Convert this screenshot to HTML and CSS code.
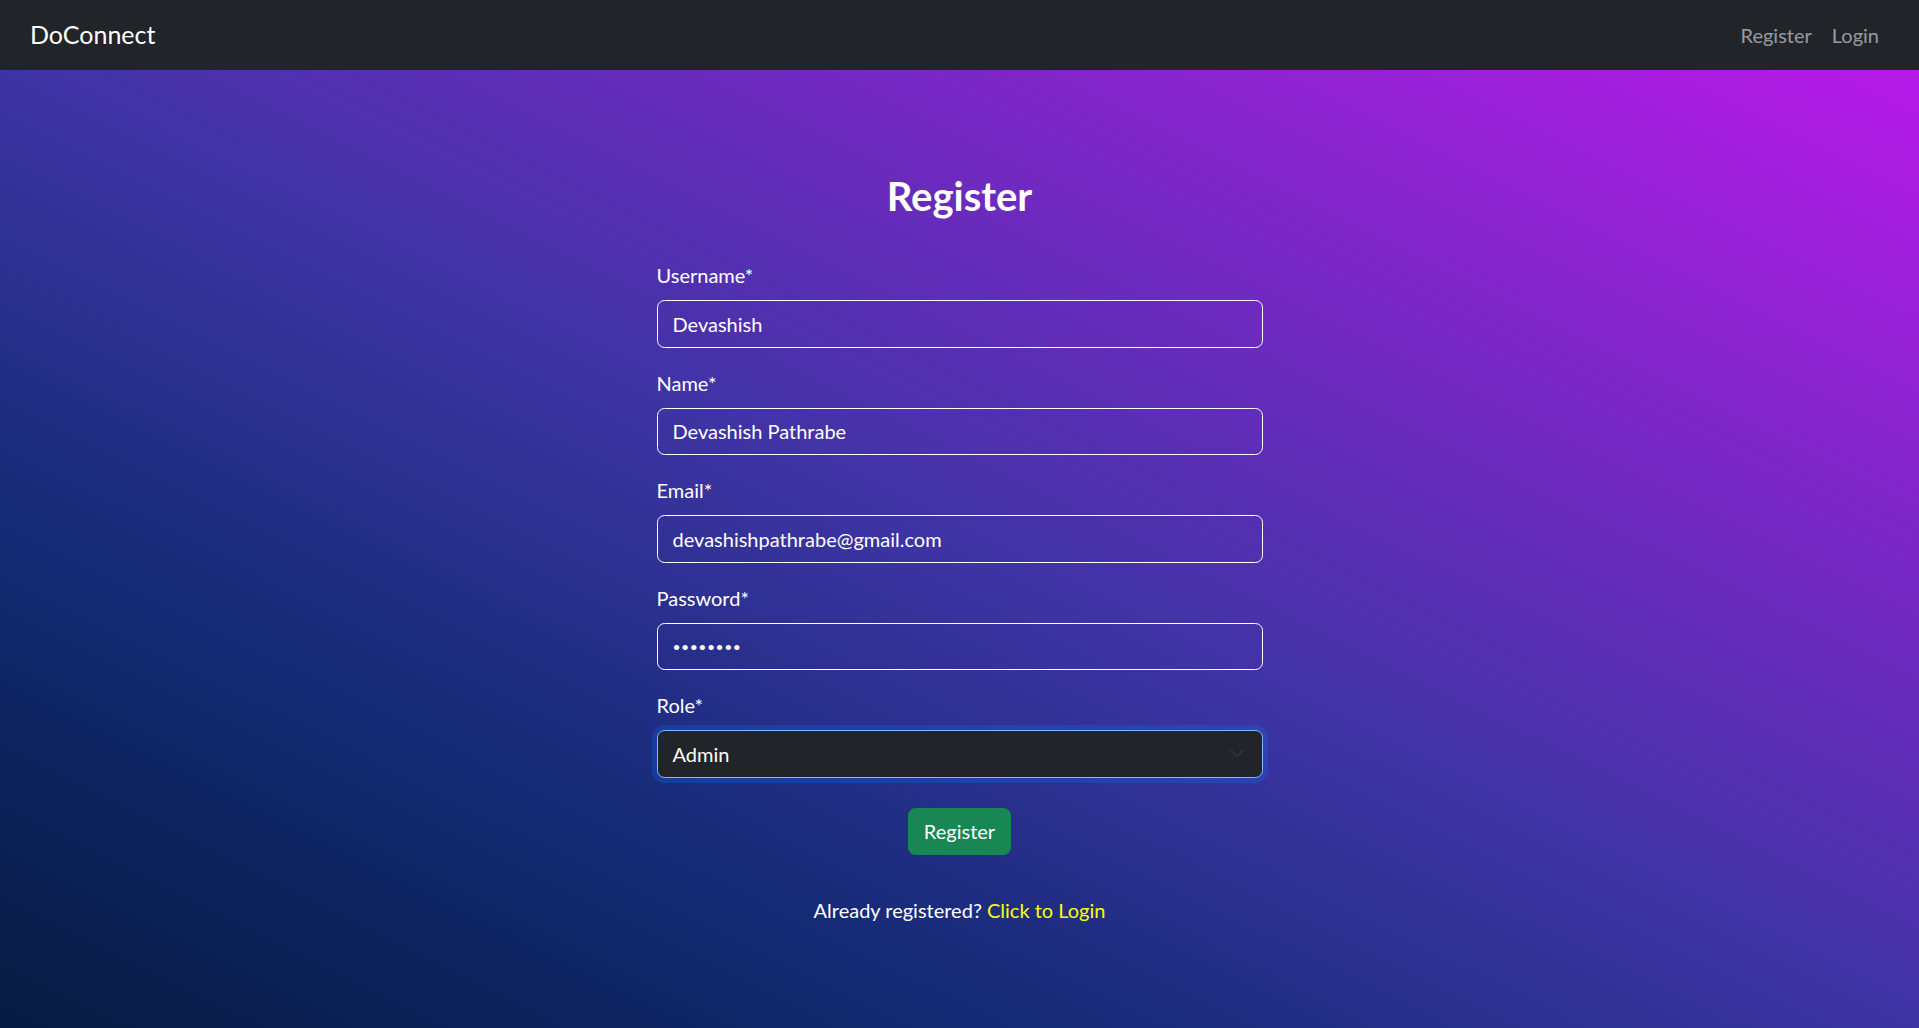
FILE: index.html
```html
<!DOCTYPE html>
<html lang="en">
<head>
<meta charset="utf-8">
<title>DoConnect - Register</title>
<link rel="stylesheet" href="styles.css">
</head>
<body>
<nav class="navbar">
  <a class="brand" href="#">DoConnect</a>
  <div class="nav-links">
    <a class="nav-link" href="#">Register</a>
    <a class="nav-link" href="#">Login</a>
  </div>
</nav>
<main class="page">
  <h2 class="title">Register</h2>
  <form class="form">
    <div class="group">
      <label class="label">Username*</label>
      <input class="control" type="text" value="Devashish">
    </div>
    <div class="group">
      <label class="label">Name*</label>
      <input class="control" type="text" value="Devashish Pathrabe">
    </div>
    <div class="group">
      <label class="label">Email*</label>
      <input class="control" type="email" value="devashishpathrabe@gmail.com">
    </div>
    <div class="group">
      <label class="label">Password*</label>
      <input class="control control-password" type="password" value="password">
    </div>
    <div class="group">
      <label class="label">Role*</label>
      <div class="select">
        <span class="select-value">Admin</span>
        <svg class="chevron" width="20" height="15" viewBox="0 0 16 16"><path d="M2 5l6 6 6-6" fill="none" stroke="#343a40" stroke-width="1.5" stroke-linecap="round" stroke-linejoin="round"/></svg>
      </div>
    </div>
    <div class="actions">
      <button class="btn" type="button">Register</button>
    </div>
  </form>
  <p class="footer-text">Already registered? <a class="login-link" href="#">Click to Login</a></p>
</main>
</body>
</html>
```
FILE: styles.css
```css
* { box-sizing: border-box; }
html, body { margin: 0; padding: 0; }
body {
  font-family: "Lato", "Liberation Sans", sans-serif;
  font-size: 20px;
  line-height: 1.5;
  color: #fff;
  background: #212529;
}
.navbar {
  height: 70px;
  background: #212529;
  display: flex;
  align-items: center;
  justify-content: space-between;
  padding: 0 30px;
}
.brand {
  color: #fff;
  font-size: 25px;
  text-decoration: none;
  line-height: 1.5;
}
.nav-links { display: flex; }
.nav-link {
  color: rgba(255,255,255,.55);
  text-decoration: none;
  font-size: 20px;
  padding: 0 10px;
}
.page {
  min-height: 958px;
  background: linear-gradient(to top right, #071a40 0%, #112a72 25%, #3e34a4 50%, #b81ae9 100%);
  display: flex;
  flex-direction: column;
  align-items: center;
  padding-top: 102px;
}
.title {
  margin: 0 0 40px;
  font-size: 40px;
  line-height: 1.2;
  font-weight: 700;
}
.form {
  width: 606px;
  display: flex;
  flex-direction: column;
}
.group { margin-bottom: 20px; }
.label {
  display: block;
  margin-bottom: 10px;
  line-height: 30px;
}
.control {
  display: block;
  width: 100%;
  height: 47.5px;
  padding: 7.5px 15px;
  font: inherit;
  font-size: 20px;
  line-height: 30px;
  color: #fff;
  background: transparent;
  border: 1px solid #fff;
  border-radius: 7.5px;
  outline: none;
}
.control-password {
  font-size: 14px;
  letter-spacing: 0.5px;
}
.select {
  display: flex;
  align-items: center;
  justify-content: space-between;
  height: 47.5px;
  padding: 7.5px 15px;
  background: #212529;
  border: 1px solid #86b7fe;
  border-radius: 7.5px;
  box-shadow: 0 0 0 5px rgba(13,110,253,.25);
}
.select-value { line-height: 30px; }
.chevron { display: block; }
.actions {
  display: flex;
  justify-content: center;
  margin-top: 10px;
}
.btn {
  font: inherit;
  font-size: 20px;
  line-height: 30px;
  color: #fff;
  background: #198754;
  border: 1px solid #198754;
  border-radius: 7.5px;
  padding: 7.5px 15px;
}
.footer-text {
  margin: 40px 0 0;
  line-height: 30px;
}
.login-link {
  color: #ffff00;
  text-decoration: none;
}
```
